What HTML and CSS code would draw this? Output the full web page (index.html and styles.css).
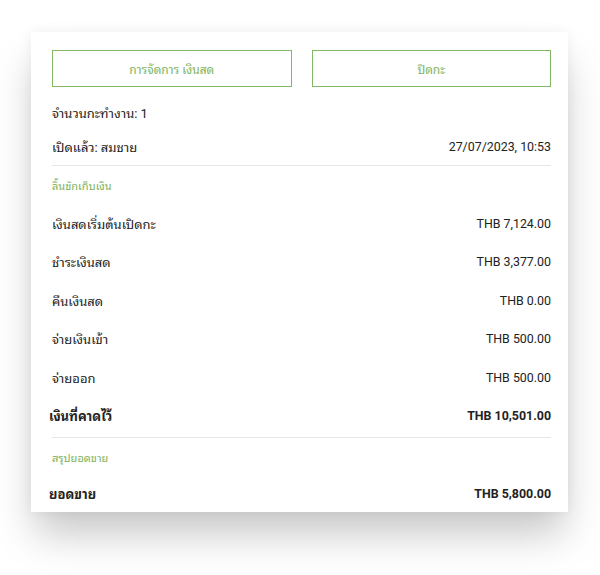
FILE: index.html
```html
<!DOCTYPE html>
<html lang="th">
<head>
<meta charset="utf-8">
<link rel="stylesheet" href="styles.css">
</head>
<body>
<div class="card">
  <div class="actions">
    <button class="btn">การจัดการ เงินสด</button>
    <button class="btn">ปิดกะ</button>
  </div>
  <div class="info">จำนวนกะทำงาน: 1</div>
  <div class="info split"><span>เปิดแล้ว: สมชาย</span><span class="val">27/07/2023, 10:53</span></div>
  <div class="divider"></div>
  <div class="section">ลิ้นชักเก็บเงิน</div>
  <div class="row"><span>เงินสดเริ่มต้นเปิดกะ</span><span class="val">THB 7,124.00</span></div>
  <div class="row"><span>ชำระเงินสด</span><span class="val">THB 3,377.00</span></div>
  <div class="row"><span>คืนเงินสด</span><span class="val">THB 0.00</span></div>
  <div class="row"><span>จ่ายเงินเข้า</span><span class="val">THB 500.00</span></div>
  <div class="row"><span>จ่ายออก</span><span class="val">THB 500.00</span></div>
  <div class="row total"><span>เงินที่คาดไว้</span><span class="val">THB 10,501.00</span></div>
  <div class="divider"></div>
  <div class="section">สรุปยอดขาย</div>
  <div class="row total last"><span>ยอดขาย</span><span class="val">THB 5,800.00</span></div>
</div>
</body>
</html>
```
FILE: styles.css
```css
html, body {
  margin: 0;
  background: #ffffff;
}
body {
  min-height: 575px;
  box-sizing: border-box;
  padding: 32px 0 0 31px;
  font-family: Roboto, "Noto Sans Thai Looped", "Loma", "Garuda", "Waree", "Tlwg Typo", "Noto Serif Thai", sans-serif;
  color: #222222;
  font-size: 13px;
}
.card {
  width: 537px;
  height: 480px;
  box-sizing: border-box;
  background: #ffffff;
  padding: 18px 17px 0 21px;
  box-shadow: 0 26px 38px -4px rgba(0, 0, 0, 0.22), 0 0 12px rgba(0, 0, 0, 0.05);
}
.actions {
  display: flex;
  gap: 20px;
  margin-bottom: 8px;
}
.btn {
  flex: 1;
  height: 37px;
  border: 1px solid #82b765;
  background: #ffffff;
  color: #7db35c;
  font-family: inherit;
  font-size: 12px;
  padding: 0;
}
.info {
  height: 34px;
  display: flex;
  align-items: center;
}
.split, .row {
  justify-content: space-between;
}
.val {
  font-size: 12.4px;
}
.divider {
  height: 1px;
  background: #e6e6e6;
  margin-top: 2px;
}
.section {
  height: 38px;
  display: flex;
  align-items: center;
  color: #7db35c;
  font-size: 11px;
}
.row {
  height: 38.5px;
  display: flex;
  align-items: center;
}
.total {
  font-weight: bold;
  margin-left: -3px;
}
.last {
  height: 34px;
}
```
